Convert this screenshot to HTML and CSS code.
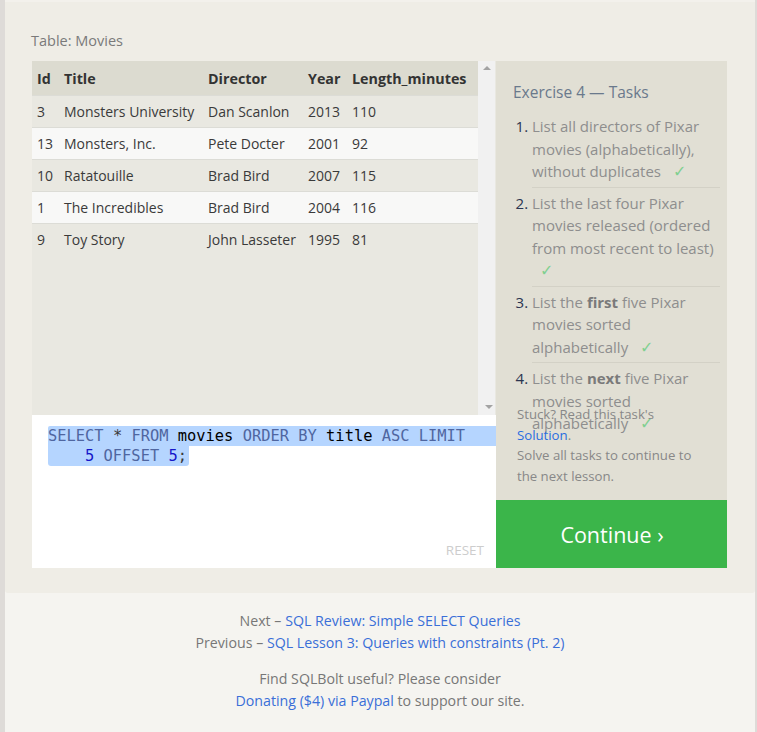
FILE: index.html
```html
<!DOCTYPE html>
<html>
<head>
<meta charset="utf-8">
<link rel="stylesheet" href="styles.css">
</head>
<body>
<div class="page">
  <section class="lesson">
    <div class="caption">Table: Movies</div>
    <div class="widget">
      <div class="left">
        <div class="results">
          <div class="table-wrap">
            <table class="tbl">
              <thead>
                <tr><th class="c-id">Id</th><th class="c-title">Title</th><th class="c-dir">Director</th><th class="c-year">Year</th><th>Length_minutes</th></tr>
              </thead>
              <tbody>
                <tr><td>3</td><td>Monsters University</td><td>Dan Scanlon</td><td>2013</td><td>110</td></tr>
                <tr class="alt"><td>13</td><td>Monsters, Inc.</td><td>Pete Docter</td><td>2001</td><td>92</td></tr>
                <tr><td>10</td><td>Ratatouille</td><td>Brad Bird</td><td>2007</td><td>115</td></tr>
                <tr class="alt"><td>1</td><td>The Incredibles</td><td>Brad Bird</td><td>2004</td><td>116</td></tr>
                <tr><td>9</td><td>Toy Story</td><td>John Lasseter</td><td>1995</td><td>81</td></tr>
              </tbody>
            </table>
          </div>
          <div class="scrollbar"><span class="arr up"></span><span class="arr down"></span></div>
        </div>
        <div class="editor">
          <div class="code-line l1"><span class="kw">SELECT</span> * <span class="kw">FROM</span> <span class="id">movies</span> <span class="kw">ORDER BY</span> <span class="id">title</span> <span class="kw">ASC LIMIT</span></div>
          <div class="code-line l2"><span class="num">5</span> <span class="kw">OFFSET</span> <span class="num">5</span>;</div>
          <div class="reset">RESET</div>
        </div>
      </div>
      <div class="right">
        <div class="tasks">
          <div class="tasks-title">Exercise 4 — Tasks</div>
          <div class="task-list-box">
            <ol class="task-list">
              <li><span class="t">List all directors of Pixar movies (alphabetically), without duplicates <span class="check">✓</span></span></li>
              <li><span class="t">List the last four Pixar movies released (ordered from most recent to least) <span class="check">✓</span></span></li>
              <li><span class="t">List the <b>first</b> five Pixar movies sorted alphabetically <span class="check">✓</span></span></li>
              <li><span class="t">List the <b>next</b> five Pixar movies sorted alphabetically <span class="check">✓</span></span></li>
            </ol>
          </div>
          <div class="stuck">Stuck? Read this task's <a href="#">Solution</a>.<br>Solve all tasks to continue to the next lesson.</div>
        </div>
        <div class="continue">Continue ›</div>
      </div>
    </div>
  </section>
  <footer class="foot">
    <p>Next – <a href="#">SQL Review: Simple SELECT Queries</a><br>Previous – <a href="#">SQL Lesson 3: Queries with constraints (Pt. 2)</a></p>
    <p>Find SQLBolt useful? Please consider<br><a href="#">Donating ($4) via Paypal</a> to support our site.</p>
  </footer>
</div>
</body>
</html>
```
FILE: styles.css
```css
html, body {
  margin: 0;
  padding: 0;
}
body {
  background: #dedbd8;
  font-family: "Open Sans", "Noto Sans", sans-serif;
  font-size: 14px;
  color: #3a3a3a;
}
.page {
  margin: 0 2px 0 5px;
  height: 732px;
  background: #f5f4f0;
}
.lesson {
  background: #efede6;
  border-top: 2px solid #f3f1ec;
  padding: 28px 28px 25px 27px;
  border-radius: 0 0 3px 3px;
}
.caption {
  color: #7a7a7a;
  font-size: 14.5px;
  height: 21px;
  line-height: 21px;
  margin-left: -1px;
  margin-bottom: 10px;
}
.widget {
  display: flex;
  width: 695px;
}
.left {
  width: 464px;
  display: flex;
  flex-direction: column;
}
.results {
  display: flex;
  height: 354px;
  background: #e9e8e1;
}
.table-wrap {
  width: 446px;
}
.tbl {
  width: 446px;
  border-collapse: collapse;
  table-layout: fixed;
}
.tbl th {
  background: #dcdbd0;
  height: 34px;
  text-align: left;
  font-weight: 700;
  color: #333;
  padding: 0 0 0 5px;
  white-space: nowrap;
  font-size: 14.3px;
}
.tbl td {
  height: 31px;
  padding: 0 0 0 5px;
  border-top: 1px solid #dcdcd6;
  white-space: nowrap;
}
.tbl tr.alt td {
  background: #f8f8f7;
}
.c-id { width: 22px; }
.c-title { width: 139px; }
.c-dir { width: 95px; }
.c-year { width: 39px; }
.scrollbar {
  width: 17px;
  background: #f1f1f1;
  position: relative;
}
.arr {
  position: absolute;
  left: 5px;
  width: 0;
  height: 0;
  border-left: 4px solid transparent;
  border-right: 4px solid transparent;
}
.arr.up {
  top: 5px;
  border-bottom: 4px solid #a3a3a3;
}
.arr.down {
  bottom: 6px;
  left: 7px;
  border-top: 4px solid #a3a3a3;
}
.editor {
  height: 153px;
  background: #fff;
  padding: 11px 0 0 16px;
  box-sizing: border-box;
  position: relative;
  font-family: "DejaVu Sans Mono", "Liberation Mono", monospace;
  font-size: 15.4px;
  line-height: 20px;
}
.code-line.l1 {
  background: #b5d5ff;
  border-radius: 2px 0 0 0;
  white-space: nowrap;
}
.code-line.l2 {
  display: inline-block;
  background: #b5d5ff;
  padding-left: 37px;
  padding-right: 2px;
  border-radius: 0 0 3px 3px;
}
.kw { color: #4f66a0; }
.id { color: #000; }
.num { color: #1616c9; }
.reset {
  position: absolute;
  right: 12px;
  bottom: 9px;
  font-family: "Open Sans", "Noto Sans", sans-serif;
  font-size: 13.5px;
  color: #cdcdcd;
  line-height: 18px;
}
.right {
  width: 231px;
  display: flex;
  flex-direction: column;
}
.tasks {
  height: 439px;
  background: #e1dfd4;
  padding: 19px 7px 0 17px;
  box-sizing: border-box;
}
.tasks-title {
  font-size: 15.5px;
  color: #6a798c;
  line-height: 24px;
}
.task-list-box {
  height: 288px;
  margin-top: 7px;
}
.task-list {
  margin: 0;
  padding: 0 0 0 19px;
  color: #2b3550;
  font-size: 15px;
}
.task-list li {
  line-height: 22.5px;
  padding: 4px 0 4px 0;
  border-bottom: 1px solid #d3d1c6;
}
.task-list li:last-child {
  border-bottom: none;
}
.task-list .t {
  color: #8e8e8e;
}
.task-list b {
  color: #7a7a7a;
}
.check {
  font-family: "DejaVu Sans", sans-serif;
  font-size: 16px;
  line-height: 0;
  color: #80d090;
  margin-left: 8px;
}
.stuck {
  font-size: 13.2px;
  line-height: 20.5px;
  color: #888;
  margin-top: 5px;
  padding: 0 22px 0 4px;
}
.stuck a {
  color: #2a6de0;
  text-decoration: none;
}
.continue {
  height: 68px;
  background: #3bb54a;
  color: #fff;
  font-size: 21.5px;
  display: flex;
  align-items: center;
  justify-content: center;
  padding-left: 1px;
  padding-top: 1px;
  box-sizing: border-box;
}
.foot {
  text-align: center;
  color: #777;
  font-size: 14.2px;
  line-height: 22px;
  padding-top: 17px;
}
.foot p {
  margin: 0 0 14px 0;
}
.foot a {
  color: #3a6fd8;
  text-decoration: none;
}
```
